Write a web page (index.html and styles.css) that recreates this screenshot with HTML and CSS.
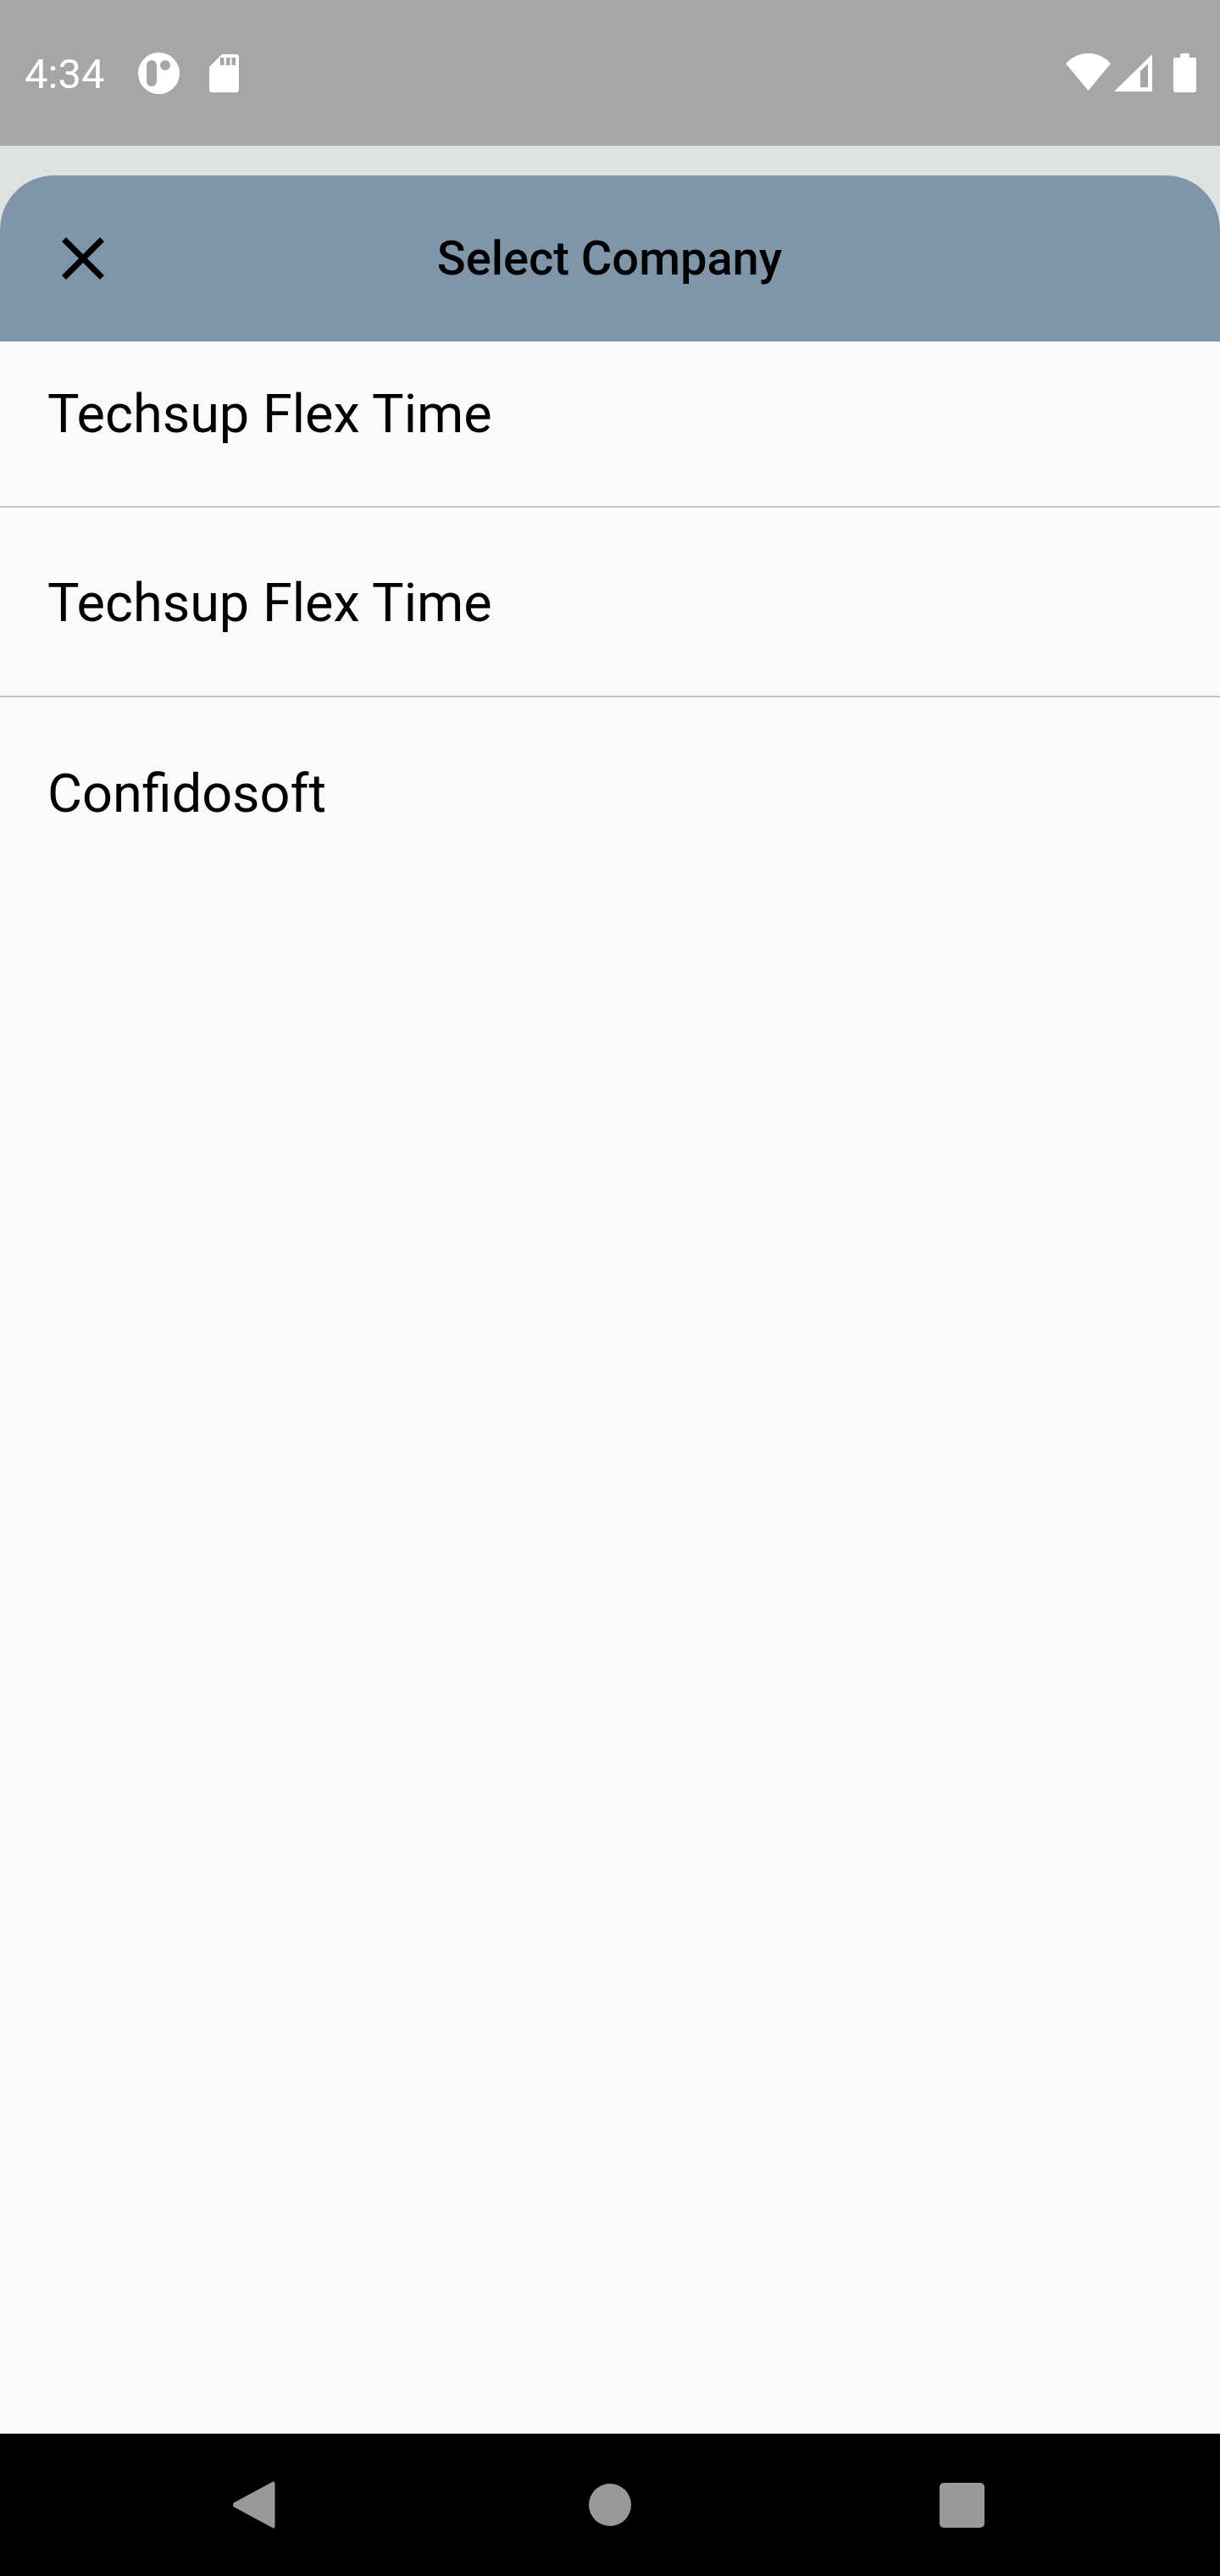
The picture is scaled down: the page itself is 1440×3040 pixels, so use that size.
FILE: index.html
```html
<!DOCTYPE html>
<html lang="en">
<head>
<meta charset="utf-8">
<title>Select Company</title>
<link rel="stylesheet" href="styles.css">
</head>
<body>
<div class="screen">
  <div class="status-bar">
    <div class="status-left">
      <span class="time">4:34</span>
      <svg class="icon-app" viewBox="0 0 49 49" aria-hidden="true"><path fill="#fff" fill-rule="evenodd" d="M24.500 0a24.500 24.500 0 1 0 0 49a24.500 24.500 0 1 0 0-49ZM16 9a6 6 0 0 1 6 6v19a6 6 0 0 1-12 0V15a6 6 0 0 1 6-6ZM32 9a6 6 0 1 1 0 12a6 6 0 1 1 0-12Z"/></svg>
      <svg class="icon-sd" viewBox="0 0 35 45" aria-hidden="true"><path fill="#fff" fill-rule="evenodd" d="M15 0H32a3 3 0 0 1 3 3V42a3 3 0 0 1-3 3H3a3 3 0 0 1-3-3V15ZM13 4v9h4.500V4ZM20 4v9h4.500V4ZM26.500 4v9h4.500V4Z"/></svg>
    </div>
    <div class="status-right">
      <svg class="icon-wifi" viewBox="0 0 53 44" aria-hidden="true"><path fill="#fff" d="M0 12A35 35 0 0 1 53 12L26.500 44Z"/></svg>
      <svg class="icon-signal" viewBox="0 0 45 44" aria-hidden="true"><path fill="#fff" fill-rule="evenodd" d="M0 44L45 0V44ZM31 20V39H40V11Z"/></svg>
      <svg class="icon-battery" viewBox="0 0 27 46" aria-hidden="true"><path fill="#fff" d="M8 2a2 2 0 0 1 2-2h7a2 2 0 0 1 2 2v3h6a2 2 0 0 1 2 2V43a3 3 0 0 1-3 3H3a3 3 0 0 1-3-3V7a2 2 0 0 1 2-2h6Z"/></svg>
    </div>
  </div>
  <div class="sheet">
    <header class="sheet-header">
      <div class="header-side">
        <svg class="icon-close" viewBox="0 0 50 50" aria-hidden="true"><path d="M2.500 2.500L47.500 47.500M47.500 2.500L2.500 47.500" stroke="#000" stroke-width="7" fill="none"/></svg>
      </div>
      <h1 class="sheet-title">Select Company</h1>
      <div class="header-side"></div>
    </header>
    <ul class="company-list">
      <li class="company-row company-row-clipped">Techsup Flex Time</li>
      <li class="company-row">Techsup Flex Time</li>
      <li class="company-row company-row-last">Confidosoft</li>
    </ul>
  </div>
  <nav class="nav-bar">
    <svg class="nav-back" viewBox="0 0 50 56" aria-hidden="true"><path fill="#999" d="M49.500 3V53C49.500 55.500 47.500 56.500 45.500 54.500L1 30.500C-.3 29.500 -.3 26.500 1 25.500L45.500 1.500C47.500 -.5 49.500 .5 49.500 3Z"/></svg>
    <span class="nav-home"></span>
    <span class="nav-recent"></span>
  </nav>
</div>
</body>
</html>
```
FILE: styles.css
```css
* {
  box-sizing: border-box;
}

html,
body {
  margin: 0;
  padding: 0;
}

body {
  font-family: Roboto, "Liberation Sans", sans-serif;
  background: #e0e0e0;
  color: #000;
}

.screen {
  width: 1440px;
  height: 3040px;
  display: flex;
  flex-direction: column;
  overflow: hidden;
  background: #e0e1e1;
}

.status-bar {
  height: 172px;
  flex: none;
  background: #a6a6a6;
  display: flex;
  justify-content: space-between;
  padding: 0 28px 0 29px;
}

.status-left {
  display: flex;
  align-items: flex-start;
}

.time {
  color: #fff;
  font-size: 49px;
  line-height: 58px;
  margin-top: 59px;
  width: 134px;
}

.icon-app {
  width: 49px;
  height: 49px;
  margin-top: 62px;
}

.icon-sd {
  width: 35px;
  height: 45px;
  margin: 64px 0 0 35px;
}

.status-right {
  display: flex;
  align-items: flex-start;
}

.icon-wifi {
  width: 53px;
  height: 44px;
  margin-top: 63px;
}

.icon-signal {
  width: 45px;
  height: 44px;
  margin: 64px 0 0 4px;
}

.icon-battery {
  width: 27px;
  height: 46px;
  margin: 63px 0 0 25px;
}

.sheet {
  flex: 1;
  margin-top: 35px;
  background: #fafafa;
  border-radius: 64px 64px 0 0;
  overflow: hidden;
  display: flex;
  flex-direction: column;
}

.sheet-header {
  height: 196px;
  flex: none;
  background: #7e95aa;
  display: grid;
  grid-template-columns: 1fr auto 1fr;
  align-items: center;
}

.header-side {
  display: flex;
  padding-left: 73px;
}

.icon-close {
  width: 50px;
  height: 50px;
}

.sheet-title {
  margin: 0 1px 0 0;
  font-size: 56px;
  font-weight: 500;
  line-height: 66px;
}

.company-list {
  list-style: none;
  margin: 0;
  padding: 0;
}

.company-row {
  height: 224px;
  padding: 2px 0 0 56px;
  display: flex;
  align-items: center;
  font-size: 63px;
  border-bottom: 2px solid #bcc8d4;
}

.company-row-clipped {
  height: 196px;
  padding-bottom: 26px;
}

.company-row-last {
  border-bottom: 0;
}

.nav-bar {
  height: 168px;
  flex: none;
  background: #000;
  display: flex;
  align-items: center;
  padding: 0 0 0 275px;
}

.nav-back {
  width: 50px;
  height: 56px;
}

.nav-home {
  width: 50px;
  height: 50px;
  margin: 0 364px 0 370px;
  border-radius: 50%;
  background: #999;
}

.nav-recent {
  width: 53px;
  height: 53px;
  border-radius: 5px;
  background: #999;
}
```
